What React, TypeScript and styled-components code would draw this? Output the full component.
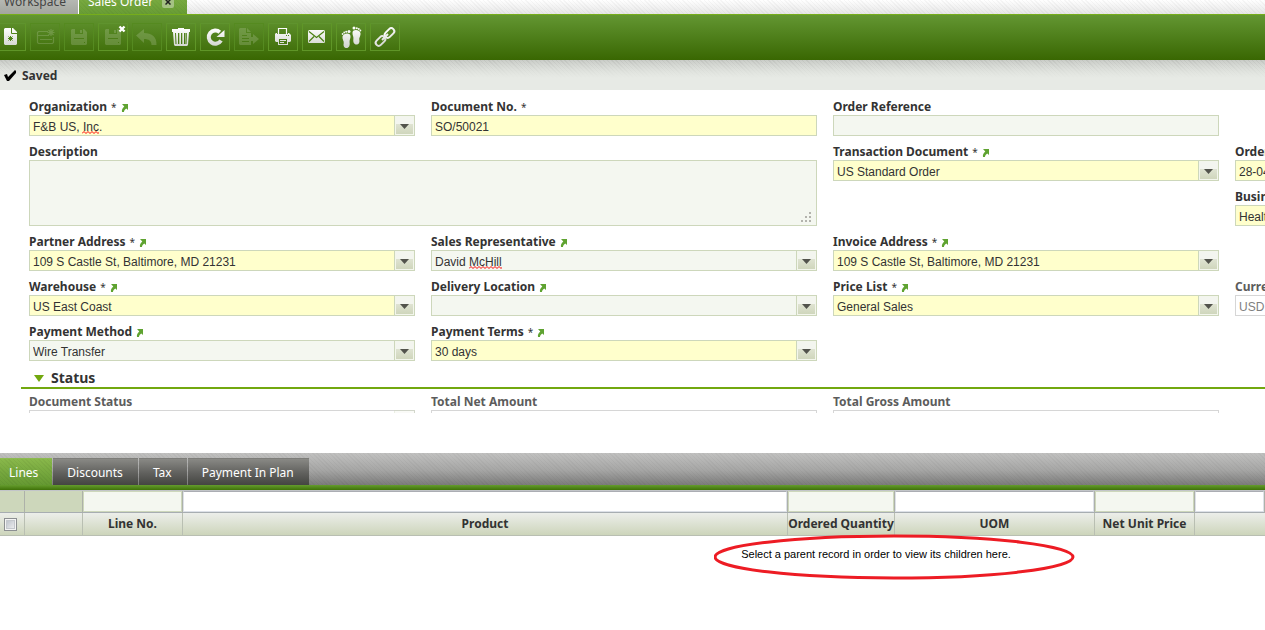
import React, { useId } from "react";
import styled, { createGlobalStyle, css } from "styled-components";

const uiFont = `"Noto Sans", "Liberation Sans", sans-serif`;
const valueFont = `"Liberation Sans", Arial, sans-serif`;

const hatch = (color: string) =>
  `repeating-linear-gradient(45deg, ${color} 0 1px, transparent 1px 3px)`;

const GlobalStyle = createGlobalStyle`
  *, *::before, *::after { box-sizing: border-box; }
  html, body { margin: 0; background: #fff; }
  body { font-family: ${uiFont}; font-size: 12px; color: #333; overflow: hidden; }
  button, input, select, textarea { margin: 0; border-radius: 0; }
`;

const Page = styled.div`
  display: flex;
  flex-direction: column;
  height: 100vh;
  overflow: hidden;
`;

/* ---------- window tabs ---------- */

const WindowTabs = styled.nav`
  display: flex;
  align-items: flex-end;
  flex: none;
  height: 14px;
  overflow: hidden;
  background: ${hatch("rgba(0,0,0,0.03)")}, linear-gradient(#fff, #e6e6e6);
`;

const WindowTab = styled.button<{ $active?: boolean }>`
  display: flex;
  align-items: center;
  gap: 9px;
  height: 25px;
  padding: 0 12px 0 4px;
  border: 0;
  border-right: 1px solid #fff;
  font: 12px/18px ${uiFont};
  color: #444;
  background: linear-gradient(#c4c6c2, #a3a69f);
  ${(p) =>
    p.$active &&
    css`
      padding: 0 13px 0 9px;
      border-right: 0;
      color: #fff;
      background: ${hatch("rgba(0,0,0,0.03)")}, linear-gradient(#85b548, #689c35);
    `}
`;

const CloseMark = styled.span`
  display: flex;
  align-items: center;
  justify-content: center;
  width: 12px;
  height: 12px;
  border-radius: 2px;
  background: #a5c283;
`;

/* ---------- toolbar ---------- */

const Toolbar = styled.div`
  display: flex;
  flex: none;
  gap: 4px;
  margin-left: -4px;
  padding: 8px 0 9px;
  border-top: 1px solid #76ad1b;
  background: linear-gradient(#639632, #396702);
`;

const ToolButton = styled.button`
  display: flex;
  align-items: center;
  justify-content: center;
  flex: none;
  width: 30px;
  height: 28px;
  padding: 0;
  border: 1px solid #5f9627;
  border-top-color: #5f932e;
  background: transparent;

  &:disabled {
    border-color: #558a20;
  }
`;

const Icon = styled.svg`
  display: block;
  width: 22px;
  height: 22px;
  overflow: visible;
`;

/* ---------- message bar ---------- */

const MessageBar = styled.div`
  display: flex;
  align-items: center;
  flex: none;
  gap: 6px;
  height: 30px;
  padding-left: 4px;
  font-weight: 700;
  background: linear-gradient(rgba(231, 234, 229, 0), #e7eae5 60%),
    ${hatch("rgba(0,0,0,0.05)")}, linear-gradient(#c9ccc7, #e7eae5);
`;

/* ---------- form ---------- */

const FormPane = styled.form`
  flex: 1;
  min-height: 0;
  margin-bottom: 40px;
  padding: 8px 0 0 29px;
  overflow: hidden;
`;

const FieldGrid = styled.div`
  display: grid;
  grid-template-columns: repeat(4, minmax(386px, 1fr));
  gap: 7px 16px;
`;

const FieldBox = styled.div<{ $col: number; $row: number; $wide?: boolean }>`
  display: flex;
  flex-direction: column;
  grid-column: ${(p) => p.$col} / span ${(p) => (p.$wide ? 2 : 1)};
  grid-row: ${(p) => p.$row} / span ${(p) => (p.$wide ? 2 : 1)};
`;

const LabelRow = styled.div<{ $muted?: boolean }>`
  display: flex;
  align-items: center;
  gap: 4px;
  padding-top: 1px;
  font-weight: 700;
  line-height: 16px;
  color: ${(p) => (p.$muted ? "#5c5c5c" : "#333")};
`;

const Star = styled.span`
  font-size: 10px;
  font-weight: 400;
`;

const LinkMark = styled.svg`
  width: 7px;
  height: 9px;
`;

type Tone = "required" | "plain" | "readonly";

const tones: Record<Tone, ReturnType<typeof css>> = {
  required: css`
    border-color: #cdd7bb;
    background-color: #ffffcc;
    color: #333;
  `,
  plain: css`
    border-color: #cdd7bb;
    background-color: #f4f7f0;
    color: #333;
  `,
  readonly: css`
    border-color: #d6d6d6;
    background-color: #fff;
    color: #808080;
    opacity: 1;
  `,
};

const control = css<{ $tone: Tone }>`
  display: block;
  width: 100%;
  height: 21px;
  padding: 2px 3px 0;
  border: 1px solid;
  outline: 0;
  appearance: none;
  font: 12px/16px ${valueFont};
  ${(p) => tones[p.$tone]}
`;

const TextInput = styled.input<{ $tone: Tone }>`
  ${control}
`;

const Select = styled.select<{ $tone: Tone }>`
  ${control}
`;

const TextArea = styled.textarea<{ $tone: Tone }>`
  ${control}
  height: auto;
  resize: none;
`;

const ControlWrap = styled.div`
  position: relative;
  display: flex;
  flex: 1;
`;

const Picker = styled.span<{ $muted?: boolean }>`
  position: absolute;
  top: 0;
  right: 0;
  display: flex;
  align-items: center;
  justify-content: center;
  width: 21px;
  height: 21px;
  padding-top: 2px;
  border: 1px solid #cdd7bb;
  background: linear-gradient(#f3f5ef 0 8px, #dfe3d2 8px, #ced5ba);
  box-shadow: inset 0 0 0 1px #f3f6ec;
  pointer-events: none;
  opacity: ${(p) => (p.$muted ? 0.4 : 1)};
`;

const Grip = styled.svg`
  position: absolute;
  right: 5px;
  bottom: 3px;
  width: 11px;
  height: 11px;
`;

const Squiggle = styled.svg<{ $left: number; $width: number }>`
  position: absolute;
  top: 16px;
  left: ${(p) => p.$left}px;
  width: ${(p) => p.$width}px;
  height: 3px;
`;

const SectionHeader = styled.button`
  display: flex;
  align-items: center;
  gap: 7px;
  width: calc(100% + 8px);
  margin: 8px 0 4px -8px;
  padding: 0 0 0 13px;
  border: 0;
  border-bottom: 2px solid #72a80f;
  font: 700 14px/18px ${uiFont};
  color: #333;
  text-align: left;
  background: transparent;
`;

/* ---------- child grid ---------- */

const ChildPane = styled.section`
  flex: none;
  height: 177px;
  overflow: hidden;
`;

const ChildTabs = styled.div`
  display: flex;
  gap: 1px;
  padding-top: 5px;
  background: ${hatch("rgba(0,0,0,0.03)")}, linear-gradient(#c1c1c0, #a5a5a4 55%, #7b7b7a);
`;

const TabRule = styled.div`
  height: 5px;
  background: linear-gradient(#659c2e, #3f7208);
`;

const ChildTab = styled.button<{ $active?: boolean }>`
  height: 27px;
  padding: 2px 15px 0 14px;
  border: 0;
  border-top: 1px solid #7d7d79;
  font: 12px/24px ${uiFont};
  color: #fff;
  background: linear-gradient(#898985, #60605d 55%, #444541);
  ${(p) =>
    p.$active &&
    css`
      padding: 2px 14px 0 9px;
      border-top-color: #8dba50;
      background: ${hatch("rgba(0,0,0,0.04)")}, linear-gradient(#89b84b, #659932);
    `}
`;

const Grid = styled.table`
  width: 100%;
  min-width: 1265px;
  table-layout: fixed;
  border-collapse: separate;
  border-spacing: 0;
  border-top: 1px solid #c2c5c9;
`;

const FilterCell = styled.td`
  height: 22px;
  padding: 0;
  border-right: 1px solid #adb1a9;
  border-bottom: 1px solid #a7adb1;
  background: #cdd7bb;
`;

const FilterInput = styled.input<{ $plain?: boolean }>`
  display: block;
  width: 100%;
  height: 21px;
  padding: 0 3px;
  border: 1px solid ${(p) => (p.$plain ? "#cdd7bb" : "#dde1e8")};
  border-top-color: ${(p) => (p.$plain ? "#cdd7bb" : "#abadb3")};
  outline: 0;
  font: 12px/16px ${valueFont};
  background: ${(p) => (p.$plain ? "#f4f7f0" : "#fff")};
`;

const HeadCell = styled.th`
  height: 23px;
  padding: 0;
  border-right: 1px solid #b9bfb2;
  border-bottom: 1px solid #b9bfb2;
  font: 700 12px/20px ${uiFont};
  white-space: nowrap;
  background: linear-gradient(#eceeea, #cdd5bb);

  &:last-child {
    border-right: 0;
  }
`;

const CheckBox = styled.input`
  display: block;
  width: 13px;
  height: 13px;
  margin: 0 0 0 4px;
  appearance: none;
  border: 1px solid #8c8f92;
  background: linear-gradient(135deg, #b4bac4, #f6f6f6);
  box-shadow: inset 0 0 0 1px #f4f4f4, inset 0 0 0 2px #c4c8cd;
`;

const GridBody = styled.div`
  display: flex;
  justify-content: center;
  min-width: 1752px;
  padding-top: 10px;
`;

const EmptyMessage = styled.p`
  position: relative;
  margin: 0;
  font: 11px/16px ${valueFont};
  color: #000;
`;

const Ring = styled.svg`
  position: absolute;
  top: -12px;
  left: -27px;
  width: 362px;
  height: 46px;
`;

/* ---------- icons ---------- */

type Glyph = (fill: string) => React.ReactNode;

const floppy: Glyph = (fill) => (
  <path
    fill={fill}
    fillRule="evenodd"
    d="M4 3h12l3 3v12l-1 1H4l-1-1V4zM7 3v5h8V3zM12 4h2v3h-2zM6 12v1h10v-1zM16 16v1h1v-1z"
  />
);

const glyphs: Record<string, Glyph> = {
  create: (fill) => (
    <>
      <path fill={fill} d="M5 2h8l4 4v12l-1 1H5l-1-1V3z" />
      <path d="M11.500 2v5.500h5.500" fill="none" stroke="#4f8419" />
      <path d="M10.500 10v5M8 12.500h5M8.500 10.500l4 4M12.500 10.500l-4 4" stroke="#4f8419" />
    </>
  ),
  createInGrid: (fill) => (
    <g fill="none" stroke={fill} strokeWidth="1.200">
      <path d="M14 5.500H4.500l-1 1v10l1 1h14l1-1V11M4 9.500h11M6 13.500h12" />
      <path d="M17 3v7M13.500 6.500h7M14.500 4l5 5M19.500 4l-5 5" />
    </g>
  ),
  save: floppy,
  saveClose: (fill) => (
    <>
      {floppy(fill)}
      <path d="M17.500 .5l5 5M22.500 .5l-5 5" stroke="#fff" strokeWidth="2.400" />
    </>
  ),
  undo: (fill) => <path fill={fill} d="M0 9.500L8 3v4c8 0 13 4 12.500 12h-5c0-4-2.500-6-7.500-6v4z" />,
  remove: (fill) => (
    <path
      fill={fill}
      fillRule="evenodd"
      d="M8 2h6v1h6v3h-1l-1 13-1 1H5l-1-1L3 6H2V3h6zM5 7l.5 11h1L6 7zM8 7v11h1.300V7zM11 7v11h1.300V7zM14 7v11h1.300l.3-11zM17 7h-.8l-.5 11h.8z"
    />
  ),
  refresh: (fill) => (
    <>
      <path
        d="M17 14.500A6.600 6.600 0 1 1 15.800 6.200"
        fill="none"
        stroke={fill}
        strokeWidth="4"
      />
      <path fill={fill} d="M20.500 4v7h-8z" />
    </>
  ),
  exportDoc: (fill) => (
    <path
      fill={fill}
      fillRule="evenodd"
      d="M2 2h6v5h5v4h2V8l6 5-6 5v-3h-2v4H2L1 18V3zM9 2l4 4H9zM4 9v1h5V9zM4 12v1h7v-1zM4 15v1h7v-1z"
    />
  ),
  print: (fill) => (
    <>
      <path d="M6.500 8V2.500h8V8" fill="none" stroke={fill} strokeWidth="1.200" />
      <path
        fill={fill}
        fillRule="evenodd"
        d="M4 7h1v1h11V7h1l2 2v6l-1 1h-2v3H6v-3H4l-1-1V8zM14 9v1h1V9zM16 9v1h1V9zM7 13v5h8v-5zM8 14h6v1H8zM8 16h4v1H8z"
      />
    </>
  ),
  mail: (fill) => (
    <>
      <rect x="2" y="4" width="17" height="13" rx="1.500" fill={fill} />
      <path
        d="M3 5.500l7.500 6 7.500-6M3 15.500l5-5M18 15.500l-5-5"
        fill="none"
        stroke="#4a8013"
        strokeWidth="1.200"
      />
    </>
  ),
  audit: (fill) => (
    <g fill={fill}>
      <path d="M2.500 10.500C3.500 7 10 6.500 10.500 10c.3 2.500-1.300 4-.9 6.500.5 3-.6 5.500-3.100 5.500s-3.400-2.400-2.800-4.500-1.800-4.500-1.200-7z" />
      <circle cx="2.600" cy="8" r=".9" />
      <circle cx="4.200" cy="6.500" r=".9" />
      <circle cx="6.200" cy="5.700" r="1" />
      <circle cx="9" cy="5.500" r="1.500" />
      <path d="M20.500 7C19.500 3.500 13 3 12.500 6.500c-.3 2.500 1.300 4 .9 6.500-.5 3 .6 5.500 3.100 5.500s3.400-2.400 2.800-4.500 1.800-4.500 1.200-7z" />
      <circle cx="20.400" cy="4.500" r=".9" />
      <circle cx="18.800" cy="3" r=".9" />
      <circle cx="16.800" cy="2.200" r="1" />
      <circle cx="14" cy="2" r="1.500" />
    </g>
  ),
  link: (fill) => (
    <g fill="none" stroke={fill} strokeWidth="2">
      <rect x="10" y="4" width="11" height="6" rx="3" transform="rotate(-45 15.500 7)" />
      <rect x="1" y="12" width="11" height="6" rx="3" transform="rotate(-45 6.500 15)" />
      <path d="M8 14l6-6" />
    </g>
  ),
};

const tools: { name: string; label: string; disabled?: boolean }[] = [
  { name: "create", label: "New record" },
  { name: "createInGrid", label: "New record in grid", disabled: true },
  { name: "save", label: "Save", disabled: true },
  { name: "saveClose", label: "Save and close" },
  { name: "undo", label: "Undo", disabled: true },
  { name: "remove", label: "Delete" },
  { name: "refresh", label: "Refresh" },
  { name: "exportDoc", label: "Export", disabled: true },
  { name: "print", label: "Print" },
  { name: "mail", label: "Email" },
  { name: "audit", label: "Audit trail" },
  { name: "link", label: "Direct link" },
];

const faded = ["createInGrid", "save", "saveClose", "undo", "exportDoc"];

function Tool({ name, label, disabled }: { name: string; label: string; disabled?: boolean }) {
  const shade = useId();
  const fill = faded.includes(name) ? "rgba(200,215,185,0.240)" : `url(#${shade})`;
  return (
    <ToolButton type="button" aria-label={label} disabled={disabled}>
      <Icon viewBox="0 0 22 22" aria-hidden="true">
        <defs>
          <linearGradient id={shade} gradientUnits="userSpaceOnUse" x1="0" y1="2" x2="0" y2="20">
            <stop offset="0" stopColor="#fff" />
            <stop offset="1" stopColor="#d3d6d0" />
          </linearGradient>
        </defs>
        {glyphs[name](fill)}
      </Icon>
    </ToolButton>
  );
}

/* ---------- fields ---------- */

interface FieldSpec {
  label: string;
  value?: string;
  kind: "text" | "select" | "area";
  tone: Tone;
  col: number;
  row: number;
  linked?: boolean;
  misspelt?: [number, number];
}

const headerFields: FieldSpec[] = [
  { label: "Organization", value: "F&B US, Inc.", kind: "select", tone: "required", col: 1, row: 1, linked: true, misspelt: [53, 17] },
  { label: "Document No.", value: "SO/50021", kind: "text", tone: "required", col: 2, row: 1 },
  { label: "Order Reference", kind: "text", tone: "plain", col: 3, row: 1 },
  { label: "Description", kind: "area", tone: "plain", col: 1, row: 2 },
  { label: "Transaction Document", value: "US Standard Order", kind: "select", tone: "required", col: 3, row: 2, linked: true },
  { label: "Order Date", value: "28-04-2011", kind: "text", tone: "required", col: 4, row: 2 },
  { label: "Business Partner", value: "Healthy Food Supermarkets, Co.", kind: "select", tone: "required", col: 4, row: 3, linked: true },
  { label: "Partner Address", value: "109 S Castle St, Baltimore, MD 21231", kind: "select", tone: "required", col: 1, row: 4, linked: true },
  { label: "Sales Representative", value: "David McHill", kind: "select", tone: "plain", col: 2, row: 4, linked: true, misspelt: [38, 33] },
  { label: "Invoice Address", value: "109 S Castle St, Baltimore, MD 21231", kind: "select", tone: "required", col: 3, row: 4, linked: true },
  { label: "Warehouse", value: "US East Coast", kind: "select", tone: "required", col: 1, row: 5, linked: true },
  { label: "Delivery Location", kind: "select", tone: "plain", col: 2, row: 5, linked: true },
  { label: "Price List", value: "General Sales", kind: "select", tone: "required", col: 3, row: 5, linked: true },
  { label: "Currency", value: "USD", kind: "text", tone: "readonly", col: 4, row: 5 },
  { label: "Payment Method", value: "Wire Transfer", kind: "select", tone: "plain", col: 1, row: 6, linked: true },
  { label: "Payment Terms", value: "30 days", kind: "select", tone: "required", col: 2, row: 6, linked: true },
];

const statusFields: FieldSpec[] = [
  { label: "Document Status", kind: "select", tone: "readonly", col: 1, row: 1 },
  { label: "Total Net Amount", kind: "text", tone: "readonly", col: 2, row: 1 },
  { label: "Total Gross Amount", kind: "text", tone: "readonly", col: 3, row: 1 },
];

function Field({ spec }: { spec: FieldSpec }) {
  const id = useId();
  const { label, value = "", kind, tone, col, row, linked, misspelt } = spec;
  const readonly = tone === "readonly";
  return (
    <FieldBox $col={col} $row={row} $wide={kind === "area"}>
      <LabelRow $muted={readonly}>
        <label htmlFor={id}>{label}</label>
        {tone === "required" && <Star>*</Star>}
        {linked && (
          <LinkMark viewBox="0 0 7 9" aria-hidden="true">
            <path d="M1 1h6v6L5.300 5.500C4 6.500 3 7.500 3 9H1C.5 7 1.500 5 3.300 3.500z" fill="#5fa331" />
          </LinkMark>
        )}
      </LabelRow>
      <ControlWrap>
        {kind === "text" && <TextInput id={id} $tone={tone} defaultValue={value} readOnly={readonly} />}
        {kind === "area" && (
          <>
            <TextArea id={id} $tone={tone} defaultValue={value} />
            <Grip viewBox="0 0 11 11" aria-hidden="true">
              <path
                fill="#b3b3ad"
                d="M8 0h2v2H8zM4 4h2v2H4zM8 4h2v2H8zM0 8h2v2H0zM4 8h2v2H4zM8 8h2v2H8z"
              />
            </Grip>
          </>
        )}
        {kind === "select" && (
          <>
            <Select id={id} $tone={tone} defaultValue={value} disabled={readonly}>
              <option value={value}>{value}</option>
            </Select>
            <Picker $muted={readonly}>
              <svg width="9" height="5" viewBox="0 0 9 5" aria-hidden="true">
                <path d="M0 0h9L4.500 5z" fill="#52534c" />
              </svg>
            </Picker>
          </>
        )}
        {misspelt && (
          <Squiggle $left={misspelt[0]} $width={misspelt[1]} aria-hidden="true">
            <path d="M0 2.500l2-2 2 2 2-2 2 2 2-2 2 2 2-2 2 2 2-2 2 2 2-2 2 2 2-2 2 2 2-2 2 2 2-2" fill="none" stroke="#f00" />
          </Squiggle>
        )}
      </ControlWrap>
    </FieldBox>
  );
}

const columns: { title: string; width?: number; filter?: "plain" | "white" }[] = [
  { title: "", width: 25 },
  { title: "", width: 58 },
  { title: "Line No.", width: 100, filter: "plain" },
  { title: "Product", filter: "white" },
  { title: "Ordered Quantity", width: 107, filter: "plain" },
  { title: "UOM", width: 200, filter: "white" },
  { title: "Net Unit Price", width: 100, filter: "plain" },
  { title: "", width: 70, filter: "white" },
];

export default function App() {
  return (
    <Page>
      <GlobalStyle />
      <WindowTabs>
        <WindowTab type="button">Workspace</WindowTab>
        <WindowTab type="button" $active>
          Sales Order
          <CloseMark>
            <svg width="6" height="6" viewBox="0 0 6 6" aria-hidden="true">
              <path d="M.5 .5l5 5M5.500 .5l-5 5" stroke="#222" strokeWidth="1.500" />
            </svg>
          </CloseMark>
        </WindowTab>
      </WindowTabs>

      <Toolbar role="toolbar">
        {tools.map((tool) => (
          <Tool key={tool.name} {...tool} />
        ))}
      </Toolbar>

      <MessageBar role="status">
        <svg width="12" height="13" viewBox="0 0 12 13" aria-hidden="true">
          <path d="M0 6l3-1 1 3 7-7 1 1v2L5 12H3z" fill="#000" />
        </svg>
        Saved
      </MessageBar>

      <FormPane>
        <FieldGrid>
          {headerFields.map((spec) => (
            <Field key={spec.label} spec={spec} />
          ))}
        </FieldGrid>
        <SectionHeader type="button" aria-expanded="true">
          <svg width="10" height="7" viewBox="0 0 10 7" aria-hidden="true">
            <path d="M0 0h10L5 7z" fill="#72a80f" />
          </svg>
          Status
        </SectionHeader>
        <FieldGrid>
          {statusFields.map((spec) => (
            <Field key={spec.label} spec={spec} />
          ))}
        </FieldGrid>
      </FormPane>

      <ChildPane>
        <ChildTabs role="tablist">
          <ChildTab type="button" role="tab" aria-selected="true" $active>
            Lines
          </ChildTab>
          <ChildTab type="button" role="tab">Discounts</ChildTab>
          <ChildTab type="button" role="tab">Tax</ChildTab>
          <ChildTab type="button" role="tab">Payment In Plan</ChildTab>
        </ChildTabs>
        <TabRule />
        <Grid>
          <colgroup>
            {columns.map((column, i) => (
              <col key={i} width={column.width} />
            ))}
          </colgroup>
          <tbody>
            <tr>
              {columns.map((column, i) => (
                <FilterCell key={i}>
                  {column.filter && (
                    <FilterInput
                      aria-label={`Filter ${column.title}`}
                      $plain={column.filter === "plain"}
                    />
                  )}
                </FilterCell>
              ))}
            </tr>
            <tr>
              {columns.map((column, i) => (
                <HeadCell key={i} scope="col">
                  {i === 0 ? <CheckBox type="checkbox" aria-label="Select all" /> : column.title}
                </HeadCell>
              ))}
            </tr>
          </tbody>
        </Grid>
        <GridBody>
          <EmptyMessage>
            Select a parent record in order to view its children here.
            <Ring viewBox="0 0 362 46" aria-hidden="true">
              <ellipse cx="180" cy="23" rx="179" ry="21" fill="none" stroke="#ed1c24" strokeWidth="3" />
            </Ring>
          </EmptyMessage>
        </GridBody>
      </ChildPane>
    </Page>
  );
}
